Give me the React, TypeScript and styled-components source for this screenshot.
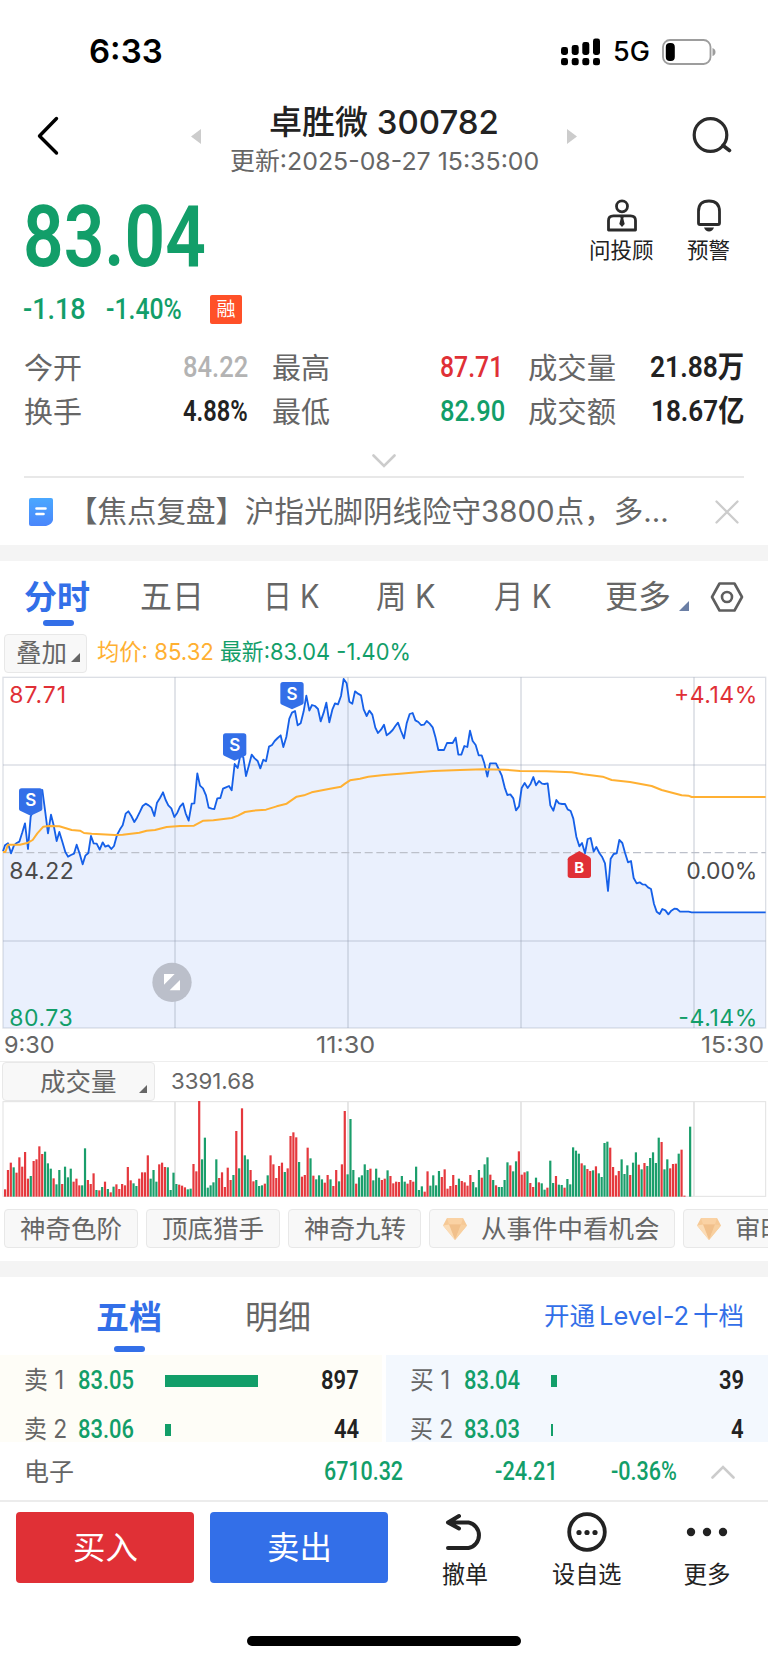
import React, { useLayoutEffect, useRef, useState } from 'react';
import styled, { createGlobalStyle } from 'styled-components';

const C = {
  green: '#129e69',
  red: '#e03036',
  blue: '#336fe8',
  ink: '#222222',
  gray: '#666666',
  pale: '#b3b3b3',
  orange: '#ffb032',
  line: '#e8e8e8',
};

const sans = `Inter, "Noto Sans CJK SC", sans-serif`;
const din = `Roboto, "Noto Sans CJK SC", sans-serif`;

const Global = createGlobalStyle`
  * { box-sizing: border-box; }
  body { margin: 0; background: #fff; }
`;

const Page = styled.main`
  width: 768px;
  height: 1663px;
  overflow: hidden;
  display: flex;
  flex-direction: column;
  background: #fff;
  color: ${C.ink};
  font-family: ${sans};
  line-height: 1;
  & > * { flex: none; }
  svg { display: block; flex: none; }
`;

/* Text condensed or widened horizontally to a given advance width. */
const FitBox = styled.span<{ $w: number; $size: number; $color?: string; $weight?: number; $din?: boolean }>`
  display: block;
  flex: none;
  width: ${p => p.$w}px;
  height: ${p => p.$size}px;
  white-space: nowrap;
  font-size: ${p => p.$size}px;
  font-weight: ${p => p.$weight ?? 400};
  font-family: ${p => (p.$din ? din : sans)};
  color: ${p => p.$color ?? 'inherit'};
`;
const FitInner = styled.span`
  display: inline-block;
  transform-origin: 0 50%;
`;

type FitProps = { w: number; size: number; color?: string; weight?: number; din?: boolean; children: string };

function Fit({ w, size, color, weight, din: useDin, children }: FitProps) {
  const ref = useRef<HTMLSpanElement>(null);
  const [k, setK] = useState(1);
  useLayoutEffect(() => {
    if (ref.current && ref.current.offsetWidth) setK(w / ref.current.offsetWidth);
  }, [w, size, children]);
  return (
    <FitBox $w={w} $size={size} $color={color} $weight={weight} $din={useDin}>
      <FitInner ref={ref} style={{ transform: `scaleX(${k})` }}>{children}</FitInner>
    </FitBox>
  );
}

/* ---------- status bar and header ---------- */

const StatusBar = styled.div`
  height: 96px;
  padding: 7px 52px 0 89px;
  display: flex;
  align-items: center;
  justify-content: space-between;
  color: #000;
`;
const StatusRight = styled.div`
  display: flex;
  align-items: center;
  gap: 12px;
`;
const Header = styled.header`
  height: 94px;
  padding: 0 36px;
  display: grid;
  grid-template-columns: 1fr 386px 1fr;
  & > :last-child { justify-self: end; }
`;
const HeaderIcon = styled.div`
  padding-top: 20px;
`;
const HeaderCenter = styled.div`
  display: flex;
  justify-content: space-between;
`;
const Arrow = styled.div`
  padding-top: 33px;
`;
const Titles = styled.div`
  display: flex;
  flex-direction: column;
  align-items: center;
  gap: 10px;
  padding-top: 10px;
`;

/* ---------- quote ---------- */

const Quote = styled.section`
  height: 150px;
  padding: 4px 38px 0 23px;
  display: flex;
  justify-content: space-between;
`;
const PriceBlock = styled.div`
  display: flex;
  flex-direction: column;
`;
const ChangeRow = styled.div`
  display: flex;
  align-items: center;
  margin-top: 14px;
  gap: 20px;
`;
const Badge = styled.span`
  width: 32px;
  height: 29px;
  margin-left: 8px;
  border-radius: 2px;
  background: #ff5028;
  color: #fff;
  display: flex;
  align-items: center;
  justify-content: center;
  font-size: 19px;
`;
const Actions = styled.div`
  display: flex;
  gap: 33px;
  padding-top: 5px;
`;
const Action = styled.div<{ $gap: number }>`
  display: flex;
  flex-direction: column;
  align-items: center;
  gap: ${p => p.$gap}px;
`;
const Stats = styled.section`
  height: 138px;
  margin: 0 24px;
  padding-top: 6px;
  border-bottom: 2px solid #e8e8e8;
`;
const StatRow = styled.div`
  height: 44px;
  display: grid;
  grid-template-columns: 224px 232px 216px;
  column-gap: 24px;
  align-items: center;
`;
const Stat = styled.div`
  display: flex;
  justify-content: space-between;
  align-items: center;
`;
const LeftValue = styled.div`
  width: 64px;
`;
const Expand = styled.div`
  display: flex;
  justify-content: center;
  padding-top: 20px;
`;
const News = styled.section`
  height: 67px;
  padding: 0 29px;
  display: flex;
  align-items: center;
`;
const NewsText = styled.div`
  flex: 1;
  padding-left: 15px;
`;
const Band = styled.div`
  height: 16px;
  background: #f4f4f4;
`;

/* ---------- chart ---------- */

const ChartTabs = styled.nav`
  height: 73px;
  padding: 20px 24px 0 24px;
  display: flex;
  color: ${C.gray};
`;
const Tab = styled.div<{ $w: number; $on?: boolean }>`
  width: ${p => p.$w}px;
  color: ${p => (p.$on ? C.blue : 'inherit')};
  display: flex;
  flex-direction: column;
`;
const Underline = styled.i<{ $left: number; $top: number }>`
  width: 31px;
  height: 6px;
  border-radius: 3px;
  margin: ${p => p.$top}px 0 0 ${p => p.$left}px;
  background: ${C.blue};
`;
const Corner = styled.div<{ $pad: number; $w: number; $left?: number }>`
  width: ${p => p.$w}px;
  padding: ${p => p.$pad}px 0 0 ${p => p.$left ?? 0}px;
`;
const Legend = styled.div`
  height: 42px;
  padding-left: 4px;
  display: flex;
  align-items: flex-start;
`;
const Chip = styled.div<{ $w: number; $pad: number }>`
  width: ${p => p.$w}px;
  height: 39px;
  padding-left: ${p => p.$pad}px;
  border: 1px solid ${C.line};
  border-radius: 4px;
  background: #f8f8f8;
  color: ${C.gray};
  display: flex;
  flex: none;
  align-items: center;
`;
const LegendText = styled.div`
  display: flex;
  gap: 6px;
  padding: 7px 0 0 10px;
`;
const TimeAxis = styled.div`
  height: 31px;
  padding: 0 4px 2px 4px;
  display: grid;
  grid-template-columns: 312px 1fr auto;
  align-items: center;
  color: ${C.gray};
`;
const VolumeHead = styled.div`
  height: 40px;
  padding-left: 2px;
  border-top: 1px solid #eeeeee;
  display: flex;
  color: ${C.gray};
`;
const VolumeValue = styled.div`
  padding: 8px 0 0 16px;
`;
const Chips = styled.div`
  height: 64px;
  width: 900px;
  padding: 12px 0 0 4px;
  display: flex;
  gap: 8px;
`;

/* ---------- order book ---------- */

const BookTabs = styled.div`
  height: 78px;
  padding: 24px 24px 0 96px;
  display: flex;
  color: ${C.gray};
`;
const LevelLink = styled.div`
  margin-left: auto;
  padding-top: 2px;
  display: flex;
  gap: 4px;
`;
const Book = styled.div`
  height: 87px;
  display: grid;
  grid-template-columns: 382px 382px;
  column-gap: 4px;
  overflow: hidden;
`;
const Side = styled.div<{ $bg: string; $right: number }>`
  background: ${p => p.$bg};
  padding: 1px ${p => p.$right}px 0 24px;
`;
const OrderRow = styled.div`
  height: 49px;
  display: grid;
  grid-template-columns: 54px 87px 1fr auto;
  align-items: center;
  color: ${C.gray};
`;
const LevelBar = styled.i<{ $w: number }>`
  width: ${p => p.$w}px;
  height: 12px;
  background: ${C.green};
`;
const IndexRow = styled.div`
  height: 60px;
  padding: 2px 33px 0 24px;
  border-bottom: 2px solid #ececec;
  display: grid;
  grid-template-columns: 300px 171px 116px 1fr auto;
  align-items: center;
  color: ${C.gray};
`;
const Toolbar = styled.footer`
  height: 132px;
  padding: 10px 0 0 16px;
  display: flex;
`;
const TradeButton = styled.button<{ $bg: string }>`
  flex: none;
  width: 178px;
  height: 71px;
  margin-right: 16px;
  padding: 0;
  border: 0;
  border-radius: 4px;
  background: ${p => p.$bg};
  color: #fff;
  line-height: 1;
  text-align: left;
  display: flex;
  align-items: center;
  justify-content: center;
`;
const Tool = styled.div<{ $w: number }>`
  flex: none;
  width: ${p => p.$w}px;
  display: flex;
  flex-direction: column;
  align-items: center;
  justify-content: space-between;
  height: 74px;
`;
const HomeBar = styled.div`
  width: 274px;
  height: 10px;
  margin: 2px auto 0;
  border-radius: 5px;
  background: #000;
`;

/* Chart data, three units to a pixel. */
const PRICE = `9,544 15,526 24,520 33,550 42,526 50,519 58,515 67,487 75,460 84,537 92,440 98,425 108,410 118,385 127,360 136,428 144,490 153,434 161,466 170,513 178,486 187,515 196,546 204,560 213,555 222,551 230,524 239,551 248,583 256,557 265,549 273,498 281,520 290,521 299,539 308,517 316,530 325,526 334,537 342,528 351,495 360,478 368,466 377,431 385,424 394,438 403,456 411,443 420,425 428,408 437,401 446,406 454,413 463,438 471,398 480,384 489,367 497,390 505,406 514,415 523,441 532,428 540,410 549,400 557,430 566,452 575,401 583,400 592,310 600,347 609,355 618,376 626,413 635,416 643,417 652,385 661,384 669,356 678,352 687,348 695,361 704,282 713,294 721,256 730,262 738,318 747,285 755,254 764,265 773,273 781,295 790,269 798,274 807,230 816,225 824,213 833,204 842,196 850,231 859,201 868,146 876,128 885,123 893,166 902,160 911,124 919,77 928,122 936,105 945,108 954,117 962,154 971,128 979,98 988,157 997,119 1005,100 1014,103 1023,78 1031,27 1040,40 1048,95 1057,101 1065,64 1074,71 1083,76 1091,118 1100,138 1108,122 1117,134 1126,173 1134,189 1143,179 1152,164 1160,196 1169,189 1178,180 1186,168 1194,158 1203,183 1212,205 1220,160 1229,132 1238,129 1246,151 1255,156 1263,165 1272,164 1280,153 1289,161 1298,172 1306,200 1315,240 1324,240 1332,240 1341,219 1350,219 1358,219 1367,203 1375,254 1384,254 1393,228 1402,231 1410,182 1418,213 1427,225 1436,256 1445,256 1453,280 1462,320 1470,280 1479,280 1488,280 1496,297 1505,316 1514,352 1522,375 1531,373 1540,385 1548,421 1557,409 1565,354 1574,339 1583,354 1591,343 1600,321 1608,346 1617,333 1626,341 1634,342 1643,340 1651,406 1660,422 1669,390 1677,400 1686,402 1695,402 1703,418 1712,423 1720,446 1729,500 1738,529 1746,519 1755,550 1763,507 1772,504 1781,545 1789,531 1798,549 1806,560 1815,580 1824,663 1832,566 1841,552 1850,550 1858,510 1867,519 1875,548 1884,577 1893,573 1901,624 1910,640 1919,637 1927,643 1936,644 1944,652 1953,657 1962,702 1970,725 1979,732 1987,717 1996,721 2005,733 2014,722 2023,716 2031,717 2040,725 2066,725 2075,727 2297,727`;

const AVERAGE = `9,546 16,546 24,524 60,524 84,518 98,510 112,490 130,470 145,468 178,469 215,480 240,482 252,489 275,491 345,495 368,494 418,488 440,482 465,480 500,471 540,468 582,467 610,452 640,451 695,444 714,437 735,426 760,422 798,419 830,409 860,401 890,380 912,376 935,367 990,356 1023,350 1035,341 1050,331 1080,326 1105,320 1152,315 1200,311 1260,306 1300,303 1380,300 1450,298 1515,299 1560,303 1640,304 1715,307 1750,313 1808,320 1835,330 1890,336 1955,348 1985,360 2045,376 2065,377 2075,381 2297,381`;

/* One bar per minute: height and direction (r = up, g = down). */
const VOLUME = `22r 80r 102r 88g 72r 118r 90r 134r 54r 62g 107r 112r 151r 128r 135g 100g 84g 55r 37g 80g 38r 90g 58g 84g 45r 54r 34r 34g 145g 50r 38r 70r 20g 19r 29g 45r 23g 13r 30g 37r 23r 38r 34r 89r 49r 40g 32g 54r 73r 73r 124r 54g 80g 45g 97r 102r 89r 88g 20g 72g 38g 36r 33r 28r 22g 24g 98r 76r 287r 112g 177g 27g 34g 43g 112g 56r 73r 29r 87r 50r 65g 197r 85g 265r 124g 112g 80r 46r 50g 32g 34g 39r 64g 124r 97r 56r 92r 102r 74g 85r 182r 193r 178r 104g 60r 65r 147r 115g 63r 52g 64g 52g 42r 65r 52g 32r 80r 46g 97r 257r 67g 233g 80g 39r 58g 64g 97g 80g 84r 49g 84g 57g 50r 54r 79g 62r 40r 45r 44r 62g 45g 39r 50r 45r 90g 20g 31g 15r 76r 33g 64g 34g 77g 59r 82r 24r 32r 65r 35r 54g 47r 43r 33r 65r 44g 28g 80g 57r 97g 118g 66r 50g 34r 29g 29g 50g 103g 94r 76g 106g 136r 66r 73r 76g 41r 29r 57g 43r 40g 21g 27r 108g 41g 62r 36g 35g 27r 53g 37g 148g 138g 129g 100r 94g 83r 77r 79g 91r 70g 59g 161g 165g 147r 89r 64r 77r 112g 68g 94g 65r 102g 133g 96r 82g 101r 92g 116g 133g 101g 177g 164r 82g 112g 85r 98r 99r 129g 141r 3r 0r 210g`.split(' ');

const GRID_X = [525, 1044, 1563, 2082];

function Flag({ x, y }: { x: number; y: number }) {
  return (
    <g transform={`translate(${x} ${y})`}>
      <path d="M-27 -40H27Q35 -40 35 -32V22Q35 26 30 28L0 42L-30 28Q-35 26 -35 22V-32Q-35 -40 -27 -40Z" fill={C.blue} />
      <text x="0" y="13" textAnchor="middle" fontSize="51" fontWeight="600" fill="#fff">S</text>
    </g>
  );
}

function AxisLabel({ x, y, w, color, end, children }: { x: number; y: number; w: number; color: string; end?: boolean; children: string }) {
  return (
    <text x={x} y={y} textLength={w} lengthAdjust="spacing" textAnchor={end ? 'end' : 'start'} fontSize="69" fill={color}>
      {children}
    </text>
  );
}

function PriceChart() {
  return (
    <svg width="768" height="354" viewBox="0 18 2304 1062" fontFamily={sans} overflow="visible">
      <polygon points={`9,1074 ${PRICE} 2297,1074`} fill="rgba(51,111,232,0.1)" />
      <g stroke="#8c96a8" strokeOpacity="0.3" fill="none">
        <rect x="9" y="22" width="2288" height="1052" strokeWidth="4" />
        {[285, 813].map(y => <path key={y} d={`M9 ${y}H2297`} strokeWidth="5" />)}
        {GRID_X.map(x => <path key={x} d={`M${x} 22V1074`} strokeWidth="5" />)}
      </g>
      <path d="M9 548H2297" stroke="#bcc0ca" strokeWidth="4" strokeDasharray="24 11" />
      <polyline points={PRICE} fill="none" stroke="#1660e8" strokeWidth="5.5" strokeLinejoin="round" />
      <polyline points={AVERAGE} fill="none" stroke={C.orange} strokeWidth="6" strokeLinejoin="round" />
      <Flag x={92} y={395} />
      <Flag x={704} y={230} />
      <Flag x={876} y={76} />
      <g transform="translate(1738 590)">
        <path d="M-27 34H27Q35 34 35 26V-22Q35 -27 30 -30L0 -47L-30 -30Q-35 -27 -35 -22V26Q-35 34 -27 34Z" fill={C.red} />
        <text x="0" y="18" textAnchor="middle" fontSize="45" fontWeight="700" fill="#fff">B</text>
      </g>
      <circle cx="516" cy="937" r="59" fill="#bbbfca" />
      <path d="M492 912H524L492 944ZM540 930V961H509Z" fill="#fff" />
      <AxisLabel x={28} y={100} w={170} color={C.red}>87.71</AxisLabel>
      <AxisLabel x={28} y={627} w={193} color="#4a4a4a">84.22</AxisLabel>
      <AxisLabel x={28} y={1069} w={190} color={C.green}>80.73</AxisLabel>
      <AxisLabel x={2272} y={100} w={250} color={C.red} end>+4.14%</AxisLabel>
      <AxisLabel x={2272} y={627} w={213} color="#4a4a4a" end>0.00%</AxisLabel>
      <AxisLabel x={2272} y={1069} w={237} color={C.green} end>-4.14%</AxisLabel>
    </svg>
  );
}

function VolumeChart() {
  return (
    <svg width="768" height="96" viewBox="0 0 2304 288">
      <g stroke="#e2e2e2" fill="none">
        <rect x="9" y="2" width="2288" height="284" strokeWidth="3" />
        {GRID_X.map(x => <path key={x} d={`M${x} 2V286`} strokeWidth="5" />)}
      </g>
      {VOLUME.map((v, i) => {
        const h = parseInt(v, 10);
        return <rect key={i} x={12 + i * 8.563} y={287 - h} width="6.6" height={h} fill={v.endsWith('r') ? '#e5383d' : '#1a9e6b'} />;
      })}
    </svg>
  );
}

const Triangle = ({ s, color = C.gray }: { s: number; color?: string }) => (
  <svg width={s} height={s} viewBox="0 0 10 10"><path d="M10 0V10H0Z" fill={color} /></svg>
);

const Diamond = () => (
  <svg width="24" height="22" viewBox="0 0 24 22">
    <path d="M4 0H20L24 7.500L12 22L0 7.500Z" fill="#f6c996" />
    <path d="M4 0H20L18 6.500H6Z" fill="#fad2a4" />
    <path d="M6 6.500H18L12 22Z" fill="#f1c08b" />
    <path d="M0 7.500L6 6.500L12 22Z" fill="#fbdcb6" />
    <path d="M24 7.500L18 6.500L12 22Z" fill="#f8d0a0" />
  </svg>
);

type Order = { side: string; price: string; bar: number; qty: string; qw: number; lw: number };
const SELL: Order[] = [
  { side: '卖 1', price: '83.05', bar: 92.5, qty: '897', qw: 38, lw: 40 },
  { side: '卖 2', price: '83.06', bar: 6, qty: '44', qw: 25, lw: 43 },
];
const BUY: Order[] = [
  { side: '买 1', price: '83.04', bar: 5.5, qty: '39', qw: 25, lw: 40 },
  { side: '买 2', price: '83.03', bar: 2, qty: '4', qw: 13, lw: 43 },
];

const Orders = ({ rows }: { rows: Order[] }) => (
  <>
    {rows.map(r => (
      <OrderRow key={r.side}>
        <Fit w={r.lw} size={25}>{r.side}</Fit>
        <Fit w={56} size={25.5} weight={500} color={C.green} din>{r.price}</Fit>
        <LevelBar $w={r.bar} />
        <Fit w={r.qw} size={25.5} weight={600} color={C.ink} din>{r.qty}</Fit>
      </OrderRow>
    ))}
  </>
);

export default function App() {
  return (
    <Page>
      <Global />
      <StatusBar>
        <Fit w={74} size={33} weight={600}>6:33</Fit>
        <StatusRight>
          <svg width="40" height="28" viewBox="0 0 40 28">
            {[0, 10.7, 21.3, 32].map((x, i) => (
              <g key={x}>
                <rect x={x} y={[9, 7, 4, 0.5][i]} width="7" height={[8, 10, 13, 16.5][i]} rx="2.4" />
                <rect x={x} y="20" width="7" height="7.3" rx="2.4" />
              </g>
            ))}
          </svg>
          <Fit w={37} size={27} weight={500}>5G</Fit>
          <svg width="54" height="26" viewBox="0 0 54 26">
            <rect x="1" y="1" width="47.5" height="24" rx="7" fill="none" stroke="#9d9d9d" strokeWidth="1.8" />
            <rect x="3.8" y="4" width="9" height="18" rx="4" />
            <path d="M50.5 9Q53.5 10 53.5 13Q53.5 16 50.5 17Z" fill="#9d9d9d" />
          </svg>
        </StatusRight>
      </StatusBar>

      <Header>
        <HeaderIcon>
          <svg width="24" height="40" viewBox="0 0 24 40">
            <path d="M20.500 2.500L3.500 20L20.500 37" fill="none" stroke="#000" strokeWidth="3.4" strokeLinecap="round" strokeLinejoin="round" />
          </svg>
        </HeaderIcon>
        <HeaderCenter>
          <Arrow><svg width="10" height="15" viewBox="0 0 10 15"><path d="M10 0V15L0 7.5Z" fill="#ccc" /></svg></Arrow>
          <Titles>
            <Fit w={230} size={33} weight={500}>卓胜微 300782</Fit>
            <Fit w={309} size={24.5} color={C.gray}>更新:2025-08-27 15:35:00</Fit>
          </Titles>
          <Arrow><svg width="10" height="15" viewBox="0 0 10 15"><path d="M0 0V15L10 7.5Z" fill="#ccc" /></svg></Arrow>
        </HeaderCenter>
        <HeaderIcon>
          <svg width="40" height="38" viewBox="0 0 40 38">
            <circle cx="18.5" cy="19" r="16.3" fill="none" stroke="#2b2b2b" strokeWidth="3.2" />
            <path d="M31 29.5L37.5 34.5" stroke="#2b2b2b" strokeWidth="3.6" strokeLinecap="round" />
          </svg>
        </HeaderIcon>
      </Header>

      <Quote>
        <PriceBlock>
          <Fit w={183} size={86} weight={600} color={C.green} din>83.04</Fit>
          <ChangeRow>
            <Fit w={63} size={30} weight={500} color={C.green} din>-1.18</Fit>
            <Fit w={76} size={30} weight={500} color={C.green} din>-1.40%</Fit>
            <Badge>融</Badge>
          </ChangeRow>
        </PriceBlock>
        <Actions>
          <Action $gap={7.5}>
            <svg width="32" height="33" viewBox="0 0 32 33" fill="none" stroke="#2b2b2b" strokeWidth="2.8">
              <circle cx="16" cy="7.3" r="5.5" />
              <path d="M2.500 31V21.500Q2.500 16.800 7.500 16.800H24.500Q29.500 16.800 29.500 21.500V31Z" strokeLinejoin="round" />
              <path d="M14 17H18L17.300 19.500L18.700 25L16 28L13.300 25L14.700 19.500Z" fill="#2b2b2b" stroke="none" />
            </svg>
            <Fit w={65} size={21.5}>问投顾</Fit>
          </Action>
          <Action $gap={7.5}>
            <svg width="26" height="33" viewBox="0 0 26 33" fill="none" stroke="#2b2b2b" strokeWidth="2.8">
              <path d="M2.500 24V12.500Q2.500 2 13 2Q23.500 2 23.500 12.500V24Q23.500 25.500 22 25.500H4Q2.500 25.500 2.500 24Z" />
              <path d="M8 28.5H18Q16.5 32.500 13 32.500Q9.500 32.500 8 28.500Z" fill="#2b2b2b" stroke="none" />
            </svg>
            <Fit w={43} size={21.5}>预警</Fit>
          </Action>
        </Actions>
      </Quote>

      <Stats>
        <StatRow>
          <Stat><Fit w={58} size={29} color={C.gray}>今开</Fit><Fit w={65} size={29.5} weight={500} color={C.pale} din>84.22</Fit></Stat>
          <Stat><Fit w={58} size={29} color={C.gray}>最高</Fit><LeftValue><Fit w={63} size={29.5} weight={500} color={C.red} din>87.71</Fit></LeftValue></Stat>
          <Stat><Fit w={88} size={29} color={C.gray}>成交量</Fit><Fit w={94} size={29.5} weight={600} din>21.88万</Fit></Stat>
        </StatRow>
        <StatRow>
          <Stat><Fit w={58} size={29} color={C.gray}>换手</Fit><Fit w={65} size={29.5} weight={600} din>4.88%</Fit></Stat>
          <Stat><Fit w={58} size={29} color={C.gray}>最低</Fit><LeftValue><Fit w={65} size={29.5} weight={500} color={C.green} din>82.90</Fit></LeftValue></Stat>
          <Stat><Fit w={88} size={29} color={C.gray}>成交额</Fit><Fit w={93} size={29.5} weight={600} din>18.67亿</Fit></Stat>
        </StatRow>
        <Expand>
          <svg width="24" height="14" viewBox="0 0 24 14"><path d="M1.500 1.500L12 12L22.500 1.500" fill="none" stroke="#ccc" strokeWidth="2.600" strokeLinecap="round" /></svg>
        </Expand>
      </Stats>

      <News>
        <svg width="24" height="28" viewBox="0 0 24 28">
          <defs><linearGradient id="doc" x1="0" y1="0" x2="0" y2="1"><stop offset="0" stopColor="#4aa8ff" /><stop offset="1" stopColor="#4a86fb" /></linearGradient></defs>
          <path d="M2 0H22Q24 0 24 2V22Q23 26.500 17 28H2Q0 28 0 26V2Q0 0 2 0Z" fill="url(#doc)" />
          <path d="M7.500 10.500H16.500M7.500 16H14.500" stroke="#fff" strokeWidth="2.600" strokeLinecap="round" />
        </svg>
        <NewsText><Fit w={601} size={29.5} color={C.gray}>【焦点复盘】沪指光脚阴线险守3800点，多...</Fit></NewsText>
        <svg width="24" height="24" viewBox="0 0 24 24"><path d="M1.500 1.500L22.500 22.500M22.500 1.500L1.500 22.500" stroke="#ccc" strokeWidth="2.300" strokeLinecap="round" /></svg>
      </News>
      <Band />

      <ChartTabs>
        <Tab $w={116} $on><Fit w={66} size={33} weight={600}>分时</Fit><Underline $left={19} $top={6} /></Tab>
        <Tab $w={123}><Fit w={64} size={32}>五日</Fit></Tab>
        <Tab $w={113}><Fit w={57} size={32}>日 K</Fit></Tab>
        <Tab $w={118}><Fit w={60} size={32}>周 K</Fit></Tab>
        <Tab $w={111}><Fit w={58} size={32}>月 K</Fit></Tab>
        <Tab $w={74}><Fit w={66} size={32}>更多</Fit></Tab>
        <Corner $w={31} $pad={20}><Triangle s={10} color="#6b7fa5" /></Corner>
        <svg width="34" height="32" viewBox="0 0 34 32" fill="none" stroke="#5e5e5e" strokeWidth="2.600">
          <path d="M9.500 2.500H24.500L32 16L24.500 29.500H9.500L2 16Z" strokeLinejoin="round" />
          <circle cx="17" cy="16" r="5" />
        </svg>
      </ChartTabs>

      <Legend>
        <Chip $w={83} $pad={11}>
          <Fit w={51} size={24.5}>叠加</Fit>
          <Corner $w={14} $pad={8} $left={4}><Triangle s={9} /></Corner>
        </Chip>
        <LegendText>
          <Fit w={117} size={23} color={C.orange}>均价: 85.32</Fit>
          <Fit w={191} size={23} color={C.green}>最新:83.04 -1.40%</Fit>
        </LegendText>
      </Legend>

      <PriceChart />
      <TimeAxis>
        <Fit w={51} size={23.5}>9:30</Fit>
        <Fit w={59} size={23.5}>11:30</Fit>
        <Fit w={63} size={23.5}>15:30</Fit>
      </TimeAxis>
      <VolumeHead>
        <Chip $w={153} $pad={37}>
          <Fit w={77} size={25.500}>成交量</Fit>
          <Corner $w={30} $pad={15}><svg width="30" height="8" viewBox="0 0 30 8"><path d="M30 0V8H22Z" fill="#666" /></svg></Corner>
        </Chip>
        <VolumeValue><Fit w={84} size={22}>3391.68</Fit></VolumeValue>
      </VolumeHead>
      <VolumeChart />
      <Chips>
        <Chip $w={134} $pad={15}><Fit w={102} size={25.500}>神奇色阶</Fit></Chip>
        <Chip $w={134} $pad={15}><Fit w={102} size={25.500}>顶底猎手</Fit></Chip>
        <Chip $w={133} $pad={15}><Fit w={102} size={25.500}>神奇九转</Fit></Chip>
        <Chip $w={246} $pad={13}><Diamond /><Corner $w={14} $pad={0} /><Fit w={179} size={25.500}>从事件中看机会</Fit></Chip>
        <Chip $w={200} $pad={13}><Diamond /><Corner $w={14} $pad={0} /><Fit w={51} size={25.500}>审时</Fit></Chip>
      </Chips>
      <Band />

      <BookTabs>
        <Tab $w={149} $on><Fit w={66} size={33} weight={600}>五档</Fit><Underline $left={18} $top={12} /></Tab>
        <Tab $w={80}><Fit w={66} size={33}>明细</Fit></Tab>
        <LevelLink>
          <Fit w={51} size={25.500} color={C.blue}>开通</Fit>
          <Fit w={90} size={25.500} color={C.blue}>Level-2</Fit>
          <Fit w={51} size={25.500} color={C.blue}>十档</Fit>
        </LevelLink>
      </BookTabs>
      <Book>
        <Side $bg="#fefdf7" $right={23}><Orders rows={SELL} /></Side>
        <Side $bg="#f3f8fe" $right={24}><Orders rows={BUY} /></Side>
      </Book>
      <IndexRow>
        <Fit w={50} size={25}>电子</Fit>
        <Fit w={79} size={25.500} weight={500} color={C.green} din>6710.32</Fit>
        <Fit w={63} size={25.500} weight={500} color={C.green} din>-24.21</Fit>
        <Fit w={66} size={25.500} weight={500} color={C.green} din>-0.36%</Fit>
        <svg width="24" height="14" viewBox="0 0 24 14"><path d="M1.500 12.500L12 2L22.500 12.500" fill="none" stroke="#ccc" strokeWidth="2.600" strokeLinecap="round" /></svg>
      </IndexRow>

      <Toolbar>
        <TradeButton $bg={C.red}><Fit w={65} size={32}>买入</Fit></TradeButton>
        <TradeButton $bg={C.blue}><Fit w={65} size={32}>卖出</Fit></TradeButton>
        <Tool $w={122}>
          <svg width="42" height="40" viewBox="0 0 42 40" fill="none" stroke={C.ink} strokeWidth="4" strokeLinecap="round" strokeLinejoin="round">
            <path d="M15 4L4 10.500L15 16.500M4 10.500H24.500A13 13 0 0 1 24.500 36H4" />
          </svg>
          <Fit w={46} size={23.500}>撤单</Fit>
        </Tool>
        <Tool $w={121}>
          <svg width="40" height="40" viewBox="0 0 40 40">
            <circle cx="20" cy="20" r="17.800" fill="none" stroke={C.ink} strokeWidth="3.800" />
            {[12, 20, 28].map(x => <circle key={x} cx={x} cy="20.500" r="2.600" fill={C.ink} />)}
          </svg>
          <Fit w={70} size={23.500}>设自选</Fit>
        </Tool>
        <Tool $w={120}>
          <svg width="42" height="40" viewBox="0 0 42 40">
            {[5, 21, 37].map(x => <circle key={x} cx={x} cy="20" r="4.200" fill={C.ink} />)}
          </svg>
          <Fit w={47} size={23.500}>更多</Fit>
        </Tool>
      </Toolbar>
      <HomeBar />
    </Page>
  );
}
